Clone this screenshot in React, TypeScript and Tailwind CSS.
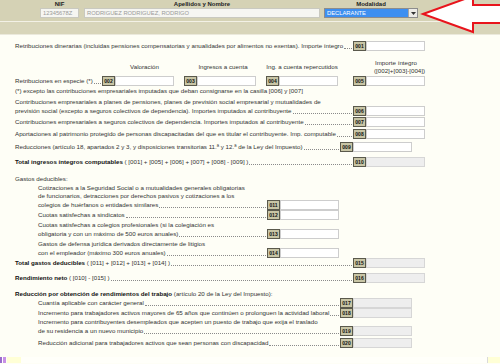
import type { ReactNode } from 'react';

type Col = 'A' | 'B' | 'C';

const colPad: Record<Col, string> = {
  A: 'pr-0',
  B: 'pr-[13px]',
  C: 'pr-[86px]',
};

function Box({ code }: { code: string }) {
  return (
    <div className="w-[13px] h-[10px] shrink-0 bg-[#c8c5a5] border border-[#5a594c] text-[5px] font-bold leading-[8px] text-center text-[#111]">
      {code}
    </div>
  );
}

function Field({ code, gray }: { code: string; gray?: boolean }) {
  return (
    <div className="flex shrink-0">
      <Box code={code} />
      <div
        className={
          gray
            ? 'w-[59px] h-[10px] bg-[#eeeeee] border border-[#d6d6d6]'
            : 'w-[59px] h-[10px] bg-white border border-[#cdcdcd]'
        }
      />
    </div>
  );
}

interface RowProps {
  lines?: string[];
  last: ReactNode;
  code: string;
  gray?: boolean;
  col: Col;
  indent?: boolean;
  className?: string;
}

function Row({ lines = [], last, code, gray, col, indent, className = '' }: RowProps) {
  return (
    <div className={`flex items-end ${className}`}>
      <div className={indent ? 'flex-1 min-w-0 pl-[23px]' : 'flex-1 min-w-0'}>
        {lines.map((l) => (
          <div key={l} className="leading-[8px] whitespace-nowrap">
            {l}
          </div>
        ))}
        <div className="flex items-center h-[10px]">
          <span className="whitespace-nowrap">{last}</span>
          <div className="flex-1 h-[6px] border-b border-dotted border-[#8a8a8a] mx-[1px]" />
        </div>
      </div>
      <div className={colPad[col]}>
        <Field code={code} gray={gray} />
      </div>
    </div>
  );
}

function Bold({ children }: { children: ReactNode }) {
  return <span className="font-bold text-[#111]">{children}</span>;
}

export default function App() {
  return (
    <div className="relative w-[500px] h-[364px] overflow-hidden bg-[#fefef6] font-['Liberation_Sans',Arial,sans-serif] text-[6.2px] text-[#333]">
      {/* Header */}
      <div className="h-[21px] bg-[#d5d2b5] flex pl-[40px] pt-[1px]">
        <div className="w-[39px] flex flex-col items-center">
          <div className="h-[7px] leading-[7px] text-[6px] font-bold text-[#222]">NIF</div>
          <div className="w-full h-[10px] bg-[#f6f6f2] border border-[#c9c9c0] text-[5.8px] leading-[8px] pl-[2px] text-[#9a9a9a]">
            12345678Z
          </div>
        </div>
        <div className="w-[236px] ml-[5px] flex flex-col items-center">
          <div className="h-[7px] leading-[7px] text-[6px] font-bold text-[#222]">Apellidos y Nombre</div>
          <div className="w-full h-[10px] bg-[#f6f6f2] border border-[#c9c9c0] text-[5.8px] leading-[8px] pl-[2px] text-[#9a9a9a]">
            RODRIGUEZ RODRIGUEZ, RODRIGO
          </div>
        </div>
        <div className="w-[94px] ml-[4px] flex flex-col items-center">
          <div className="h-[7px] leading-[7px] text-[6px] font-bold text-[#222]">Modalidad</div>
          <div className="w-full h-[10px] flex bg-[#3d8ff0] border border-[#8c8c8c]">
            <div className="flex-1 text-[5.8px] leading-[8px] pl-[2px] text-white">DECLARANTE</div>
            <div className="w-[9px] h-full bg-[#ecebe6] border-l border-[#a5a5a5] flex items-center justify-center">
              <svg width="5" height="3" viewBox="0 0 5 3">
                <path d="M0 0 H5 L2.5 3 Z" fill="#333" />
              </svg>
            </div>
          </div>
        </div>
      </div>
      <div className="h-[1px] bg-[#f3f1e6]" />
      <div className="h-[12px] bg-[#d8d5ba]" />
      <div className="h-[1px] bg-[#ebe9dc]" />

      {/* Form */}
      <div className="pl-[15px] w-[425px]">
        <Row
          className="mt-[6px]"
          last="Retribuciones dinerarias (incluidas pensiones compensatorias y anualidades por alimentos no exentas). Importe íntegro"
          code="001"
          col="A"
        />

        {/* column headings */}
        <div className="flex items-center h-[16px] mt-[8px] pl-[87px] whitespace-nowrap">
          <div className="w-[72px] pl-[13px] text-center">Valoración</div>
          <div className="w-[72px] ml-[10px] pl-[6px] text-center">Ingresos a cuenta</div>
          <div className="w-[72px] ml-[10px] text-center">Ing. a cuenta repercutidos</div>
          <div className="w-[72px] ml-[15px] pl-[22px] text-left leading-[8px]">
            <div>Importe íntegro</div>
            <div className="-ml-[1px]">([002]+[003]-[004])</div>
          </div>
        </div>

        <div className="flex items-center h-[10px] mt-[1px]">
          <div className="w-[87px] flex items-center">
            <span className="whitespace-nowrap">Retribuciones en especie (*)</span>
            <div className="flex-1 h-[6px] border-b border-dotted border-[#8a8a8a] mx-[1px]" />
          </div>
          <Field code="002" />
          <div className="ml-[10px]">
            <Field code="003" />
          </div>
          <div className="ml-[10px]">
            <Field code="004" />
          </div>
          <div className="ml-[15px]">
            <Field code="005" />
          </div>
        </div>

        <div className="leading-[8px] mt-[1px] whitespace-nowrap">
          (*) excepto las contribuciones empresariales imputadas que deban consignarse en la casilla [006] y [007]
        </div>

        <Row
          className="mt-[3px]"
          lines={[
            'Contribuciones empresariales a planes de pensiones, planes de previsión social empresarial y mutualidades de',
          ]}
          last="previsión social (excepto a seguros colectivos de dependencia). Importes imputados al contribuyente"
          code="006"
          col="A"
        />
        <Row
          className="mt-[1px]"
          last="Contribuciones empresariales a seguros colectivos de dependencia. Importes imputados al contribuyente"
          code="007"
          col="A"
        />
        <Row
          className="mt-[2px]"
          last="Aportaciones al patrimonio protegido de personas discapacitadas del que es titular el contribuyente. Imp. computable"
          code="008"
          col="A"
        />
        <Row
          className="mt-[3px]"
          last="Reducciones (artículo 18, apartados 2 y 3, y disposiciones transitorias 11.ª y 12.ª de la Ley del Impuesto)"
          code="009"
          col="B"
        />
        <Row
          className="mt-[5px]"
          last={
            <>
              <Bold>Total ingresos íntegros computables</Bold>
              {'  ( [001] + [005] + [006] + [007] + [008] - [009] )'}
            </>
          }
          code="010"
          gray
          col="A"
        />

        <div className="h-[10px] leading-[10px] mt-[7px]">Gastos deducibles:</div>

        <Row
          indent
          lines={[
            'Cotizaciones a la Seguridad Social o a mutualidades generales obligatorias',
            'de funcionarios, detracciones por derechos pasivos y cotizaciones a los',
          ]}
          last="colegios de huérfanos o entidades similares"
          code="011"
          col="C"
        />
        <Row indent last="Cuotas satisfechas a sindicatos" code="012" col="C" />
        <Row
          indent
          className="mt-[1px]"
          lines={['Cuotas satisfechas a colegios profesionales (si la colegiación es']}
          last="obligatoria y con un máximo de 500 euros anuales)"
          code="013"
          col="C"
        />
        <Row
          indent
          className="mt-[1px]"
          lines={['Gastos de defensa jurídica derivados directamente de litigios']}
          last="con el empleador (máximo 300 euros anuales)"
          code="014"
          col="C"
        />
        <Row
          last={
            <>
              <Bold>Total gastos deducibles</Bold>
              {'  ( [011] + [012] + [013] + [014] )'}
            </>
          }
          code="015"
          gray
          col="A"
        />
        <Row
          className="mt-[5px]"
          last={
            <>
              <Bold>Rendimiento neto</Bold>
              {'  ( [010] - [015] )'}
            </>
          }
          code="016"
          gray
          col="A"
        />

        <div className="h-[8px] leading-[8px] mt-[7px] whitespace-nowrap">
          <Bold>Reducción por obtención de rendimientos del trabajo</Bold>
          {'  (artículo 20 de la Ley del Impuesto):'}
        </div>

        <Row indent last="Cuantía aplicable con carácter general" code="017" gray col="B" />
        <Row
          indent
          last="Incremento para trabajadores activos mayores de 65 años que continúen o prolonguen la actividad laboral"
          code="018"
          gray
          col="B"
        />
        <Row
          indent
          lines={['Incremento para contribuyentes desempleados que acepten un puesto de trabajo que exija el traslado']}
          last="de su residencia a un nuevo municipio"
          code="019"
          gray
          col="B"
        />
        <Row
          indent
          className="mt-[2px]"
          last="Reducción adicional para trabajadores activos que sean personas con discapacidad"
          code="020"
          gray
          col="B"
        />
      </div>

      {/* bottom strip */}
      <div className="flex h-[6px] mt-[9px]">
        <div className="w-[2px] bg-[#9a6ccc]" />
        <div className="w-[1px] bg-white" />
        <div className="w-[3px] bg-[#c790e6]" />
        <div className="w-[14px] ml-[1px] bg-[#ffffd6]" />
        <div className="flex-1 bg-[#fffffa]" />
        <div className="w-[1px] bg-[#dadada]" />
        <div className="w-[12px] bg-[#ffffd6]" />
      </div>

      {/* callout arrow */}
      <svg className="absolute top-0 left-[419px]" width="81" height="36" viewBox="419 0 81 36">
        <polygon
          points="423,14 473,-4 473,5 501,5 501,23 473,23 473,32"
          fill="white"
          stroke="#e8141c"
          strokeWidth="2"
          strokeLinejoin="miter"
        />
      </svg>
    </div>
  );
}
